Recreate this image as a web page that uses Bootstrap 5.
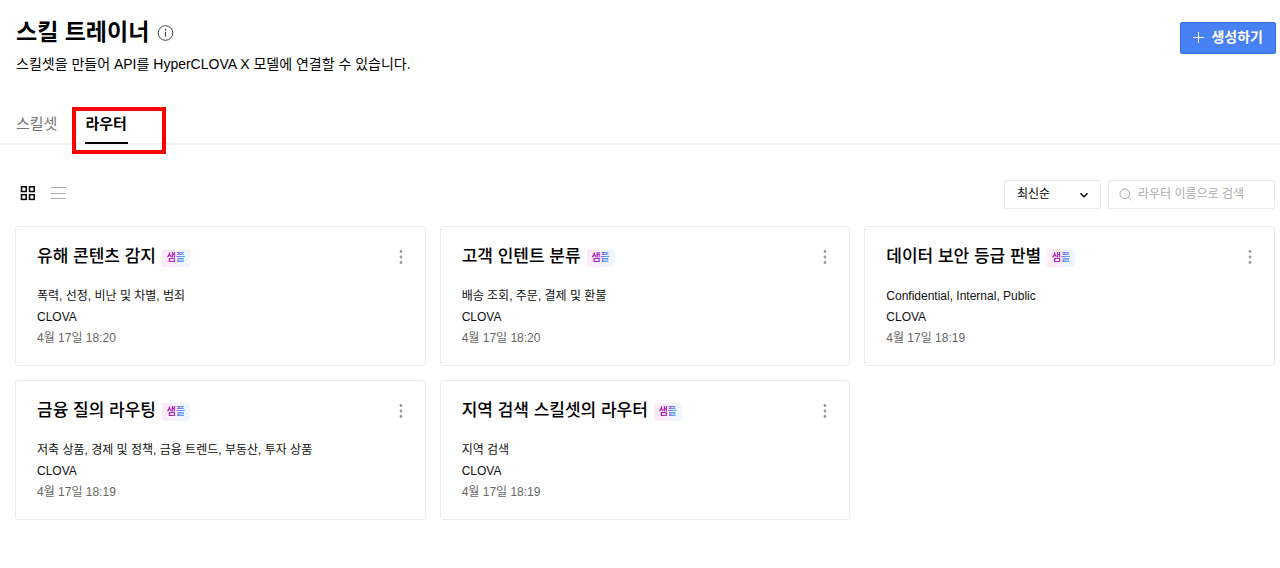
<!DOCTYPE html>
<html lang="ko">
<head>
<meta charset="utf-8">
<meta name="viewport" content="width=device-width, initial-scale=1">
<title>스킬 트레이너</title>
<link href="https://cdn.jsdelivr.net/npm/bootstrap@5.3.0/dist/css/bootstrap.min.css" rel="stylesheet">
<style>
  body { font-family: "Liberation Sans", "Noto Sans CJK KR", sans-serif; font-size: 12px; line-height: 21px; color: #000; background: #fff; }
  .page-head { padding: 16px 4px 0 16px; }
  .page-title { font-size: 23px; line-height: 32px; font-weight: 700; }
  .page-desc { font-size: 14px; line-height: 24px; margin-top: 4px; }
  .btn-create { background: #4880f6; border: 1px solid #2f6fe8; border-radius: 2px; color: #fff; font-size: 14px; line-height: 20px; font-weight: 700; height: 32px; margin-top: 6px; padding: 0 12px 3px 11px; gap: 6px; }
  .btn-create:hover { background: #3872ee; color: #fff; }
  .btn-create svg { margin-top: 2px; }
  .tab-bar { margin-top: 36px; padding-left: 16px; gap: 28px; border-bottom: 2px solid #f3f3f3; }
  .tab-bar .nav-link { padding: 0; height: 32px; font-size: 15px; line-height: 24px; color: #777; margin-bottom: -1px; }
  .tab-bar .nav-link.active { color: #000; font-weight: 700; border-bottom: 2px solid #000; padding-right: 1px; }
  .highlight-box { position: absolute; left: -13px; top: -5px; width: 94px; height: 47px; border: 4px solid #fe0000; pointer-events: none; }
  .page-body { padding: 35px 5px 0 15px; }
  .view-switch { gap: 15px; padding-left: 5px; }
  .view-btn { padding: 0; border: 0; background: none; line-height: 0; }
  .filters { gap: 7px; }
  .sort-select { width: 97px; height: 29px; padding: 0 12px 1px; font-size: 12px; line-height: 20px; color: #000; border: 1px solid #ebebeb; border-radius: 2px;
    background-image: url("data:image/svg+xml,%3Csvg xmlns='http://www.w3.org/2000/svg' viewBox='0 0 10 10'%3E%3Cpath d='M1.5 3.2 5 6.7 8.5 3.2' fill='none' stroke='%23000' stroke-width='1.4'/%3E%3C/svg%3E"); background-size: 10px 10px; background-position: right 11px center; }
  .search-box { width: 167px; height: 29px; border: 1px solid #ebebeb; border-radius: 2px; padding: 0 10px 1px; gap: 6px; }
  .search-box input { border: 0; padding: 0; font-size: 12px; line-height: 20px; min-height: 0; }
  .search-box input::placeholder { color: #adadad; }
  .router-grid { --bs-gutter-x: 14px; --bs-gutter-y: 14px; margin-top: 3px; }
  .router-card { border: 1px solid #ebebeb; border-radius: 3px; padding: 18px 20px 16px 21px; color: #111; }
  .router-top { margin-bottom: 17px; }
  .router-name { font-size: 17px; line-height: 24px; font-weight: 500; color: #000; }
  .sample-tag { width: 28px; height: 18px; margin-left: 6px; margin-top: 2px; border-radius: 2px; background: linear-gradient(90deg, #ffeaf5, #eef8ff); font-size: 10px; line-height: 18px; font-weight: 700; text-align: center; }
  .sample-tag span { background: linear-gradient(100deg, #c0009a 0%, #a233d6 45%, #5aa8ff 80%); -webkit-background-clip: text; background-clip: text; color: transparent; }
  .router-date { color: #666; }
</style>
</head>
<body>
<header class="page-head d-flex justify-content-between align-items-start">
  <div>
    <div class="d-flex align-items-center gap-2">
      <h1 class="page-title mb-0">스킬 트레이너</h1>
      <svg width="17" height="17" viewBox="0 0 17 17" fill="none" stroke="#444" aria-hidden="true"><circle cx="8.500" cy="9" r="7.300"/><path d="M8.500 8v4.500" stroke-width="1.200"/><circle cx="8.500" cy="5.900" r=".8" fill="#444" stroke="none"/></svg>
    </div>
    <p class="page-desc mb-0">스킬셋을 만들어 API를 HyperCLOVA X 모델에 연결할 수 있습니다.</p>
  </div>
  <button type="button" class="btn btn-create d-flex align-items-center">
    <svg width="13" height="13" viewBox="0 0 13 13" stroke="#fff" fill="none" aria-hidden="true"><path d="M6.500 1v11M1 6.500h11"/></svg>
    <span>생성하기</span>
  </button>
</header>

<nav class="tab-bar nav flex-nowrap">
  <a class="nav-link" href="#skillset">스킬셋</a>
  <div class="position-relative">
    <a class="nav-link active" href="#router" aria-current="page">라우터</a>
    <div class="highlight-box"></div>
  </div>
</nav>

<main class="page-body">
  <div class="d-flex justify-content-between align-items-start">
    <div class="view-switch d-flex align-items-center pt-1">
      <button type="button" class="view-btn" aria-label="카드 보기"><svg width="16" height="18" viewBox="0 -1 16 18" fill="none" stroke="#000" stroke-width="1.500"><rect x="1.500" y="1.800" width="4.700" height="4.700"/><rect x="9.500" y="1.800" width="4.700" height="4.700"/><rect x="1.500" y="9.700" width="4.700" height="4.700"/><rect x="9.500" y="9.700" width="4.700" height="4.700"/></svg></button>
      <button type="button" class="view-btn" aria-label="목록 보기"><svg width="15" height="18" viewBox="0 -1 15 18" fill="none" stroke="#aaa"><path d="M0 2.500h15M0 8.500h15M0 13.500h15"/></svg></button>
    </div>
    <div class="filters d-flex">
      <select class="form-select sort-select" aria-label="정렬"><option>최신순</option></select>
      <label class="search-box d-flex align-items-center">
        <svg class="flex-shrink-0" width="13" height="13" viewBox="0 0 13 13" fill="none" stroke="#aaa" aria-hidden="true"><circle cx="5.800" cy="5.800" r="4.800"/><path d="m9.300 9.300 3 3"/></svg>
        <input type="search" class="form-control shadow-none" placeholder="라우터 이름으로 검색" aria-label="라우터 이름으로 검색">
      </label>
    </div>
  </div>

  <div class="row row-cols-3 router-grid" id="routers"></div>
</main>

<script src="https://cdn.jsdelivr.net/npm/bootstrap@5.3.0/dist/js/bootstrap.bundle.min.js"></script>
<script>
  const routers = [
    ["유해 콘텐츠 감지", "폭력, 선정, 비난 및 차별, 범죄", "4월 17일 18:20"],
    ["고객 인텐트 분류", "배송 조회, 주문, 결제 및 환불", "4월 17일 18:20"],
    ["데이터 보안 등급 판별", "Confidential, Internal, Public", "4월 17일 18:19"],
    ["금융 질의 라우팅", "저축 상품, 경제 및 정책, 금융 트렌드, 부동산, 투자 상품", "4월 17일 18:19"],
    ["지역 검색 스킬셋의 라우터", "지역 검색", "4월 17일 18:19"]
  ];
  document.getElementById("routers").innerHTML = routers.map(([name, labels, date]) => `
    <div class="col">
      <article class="router-card">
        <div class="router-top d-flex align-items-center">
          <h2 class="router-name mb-0">${name}</h2>
          <div class="sample-tag"><span>샘플</span></div>
          <button type="button" class="view-btn ms-auto" aria-label="더보기"><svg width="8" height="16" viewBox="0 0 8 16" fill="#999"><circle cx="4" cy="2.500" r="1.400"/><circle cx="4" cy="8" r="1.400"/><circle cx="4" cy="13.500" r="1.400"/></svg></button>
        </div>
        <div>${labels}</div>
        <div>CLOVA</div>
        <div class="router-date">${date}</div>
      </article>
    </div>`).join("");
</script>
</body>
</html>
